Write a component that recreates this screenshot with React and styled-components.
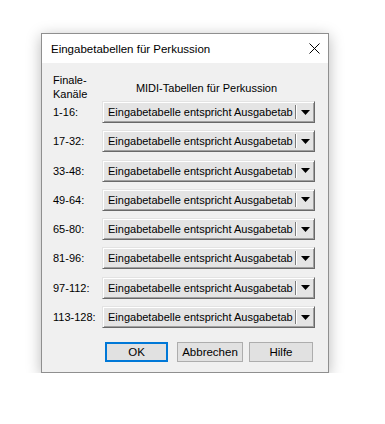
import React from "react";
import styled, { createGlobalStyle } from "styled-components";

const GlobalStyle = createGlobalStyle`
  body {
    margin: 0;
    background: #ffffff;
    font-family: "Liberation Sans", Arial, sans-serif;
  }
`;

const Page = styled.div`
  padding: 33px 0 0 41px;
`;

const Dialog = styled.div`
  width: 288px;
  height: 340px;
  box-sizing: border-box;
  border: 1px solid #8f8f8f;
  background: #f0f0f0;
  box-shadow: 0 3px 14px rgba(0, 0, 0, 0.28);
  display: flex;
  flex-direction: column;
`;

const TitleBar = styled.div`
  height: 29px;
  background: #ffffff;
  display: flex;
  align-items: center;
  justify-content: space-between;
  padding-left: 9px;
`;

const Title = styled.span`
  font-size: 11.5px;
  color: #000;
`;

const CloseButton = styled.div`
  width: 28px;
  height: 29px;
  display: flex;
  align-items: center;
  justify-content: center;
  margin-right: 0px;
`;

const Body = styled.div`
  flex: 1;
  padding: 9px 13px 11px 11px;
  font-size: 11px;
  color: #000;
`;

const Grid = styled.div`
  display: grid;
  grid-template-columns: 49px 213px;
  align-items: center;
  row-gap: 7.3px;
`;

const HeadLabel = styled.div`
  line-height: 14px;
  height: 28px;
  margin-bottom: -7.3px;
  padding-top: 1px;
`;

const HeadTitle = styled.div`
  text-align: center;
  padding-right: 4px;
  margin-bottom: -7.3px;
  padding-top: 2px;
`;

const Label = styled.div`
  line-height: 22px;
`;

const Combo = styled.div`
  height: 22px;
  box-sizing: border-box;
  border: 1px solid;
  border-color: #e3e3e3 #696969 #696969 #e3e3e3;
  box-shadow: inset 1px 1px #ffffff, inset -1px -1px #a0a0a0;
  background: #e4e4e4;
  display: flex;
  align-items: center;
`;

const ComboText = styled.div`
  flex: 1;
  padding-left: 5px;
  padding-right: 5px;
  white-space: nowrap;
  overflow: hidden;
  line-height: 20px;
`;

const Separator = styled.div`
  width: 1px;
  height: 14px;
  background: #7a7a7a;
  border-right: 1px solid #ffffff;
`;

const Arrow = styled.div`
  width: 17px;
  display: flex;
  justify-content: center;
  align-items: center;
`;

const ButtonRow = styled.div`
  display: flex;
  padding-left: 52px;
  margin-top: 14px;
`;

const Button = styled.div`
  width: ${(p) => p.$w}px;
  height: 20px;
  box-sizing: border-box;
  margin-right: ${(p) => p.$gap || 0}px;
  border: ${(p) => (p.$primary ? "2px solid #0078d7" : "1px solid #adadad")};
  background: #e1e1e1;
  display: flex;
  align-items: center;
  justify-content: center;
  font-size: 11.5px;
`;

const ranges = [
  "1-16:",
  "17-32:",
  "33-48:",
  "49-64:",
  "65-80:",
  "81-96:",
  "97-112:",
  "113-128:",
];

function App() {
  return (
    <Page>
      <GlobalStyle />
      <Dialog>
        <TitleBar>
          <Title>Eingabetabellen für Perkussion</Title>
          <CloseButton>
            <svg width="11" height="11" viewBox="0 0 11 11">
              <path d="M0.5 0.5 L10.5 10.5 M10.5 0.5 L0.5 10.5" stroke="#000" strokeWidth="1" fill="none" />
            </svg>
          </CloseButton>
        </TitleBar>
        <Body>
          <Grid>
            <HeadLabel>
              Finale-
              <br />
              Kanäle
            </HeadLabel>
            <HeadTitle>MIDI-Tabellen für Perkussion</HeadTitle>
            {ranges.map((r) => (
              <React.Fragment key={r}>
                <Label>{r}</Label>
                <Combo>
                  <ComboText>Eingabetabelle entspricht Ausgabetab</ComboText>
                  <Separator />
                  <Arrow>
                    <svg width="9" height="5" viewBox="0 0 9 5">
                      <path d="M0 0 L9 0 L4.5 5 Z" fill="#000" />
                    </svg>
                  </Arrow>
                </Combo>
              </React.Fragment>
            ))}
          </Grid>
          <ButtonRow>
            <Button $w={63} $gap={9} $primary>OK</Button>
            <Button $w={66} $gap={6}>Abbrechen</Button>
            <Button $w={64}>Hilfe</Button>
          </ButtonRow>
        </Body>
      </Dialog>
    </Page>
  );
}

export default App;
